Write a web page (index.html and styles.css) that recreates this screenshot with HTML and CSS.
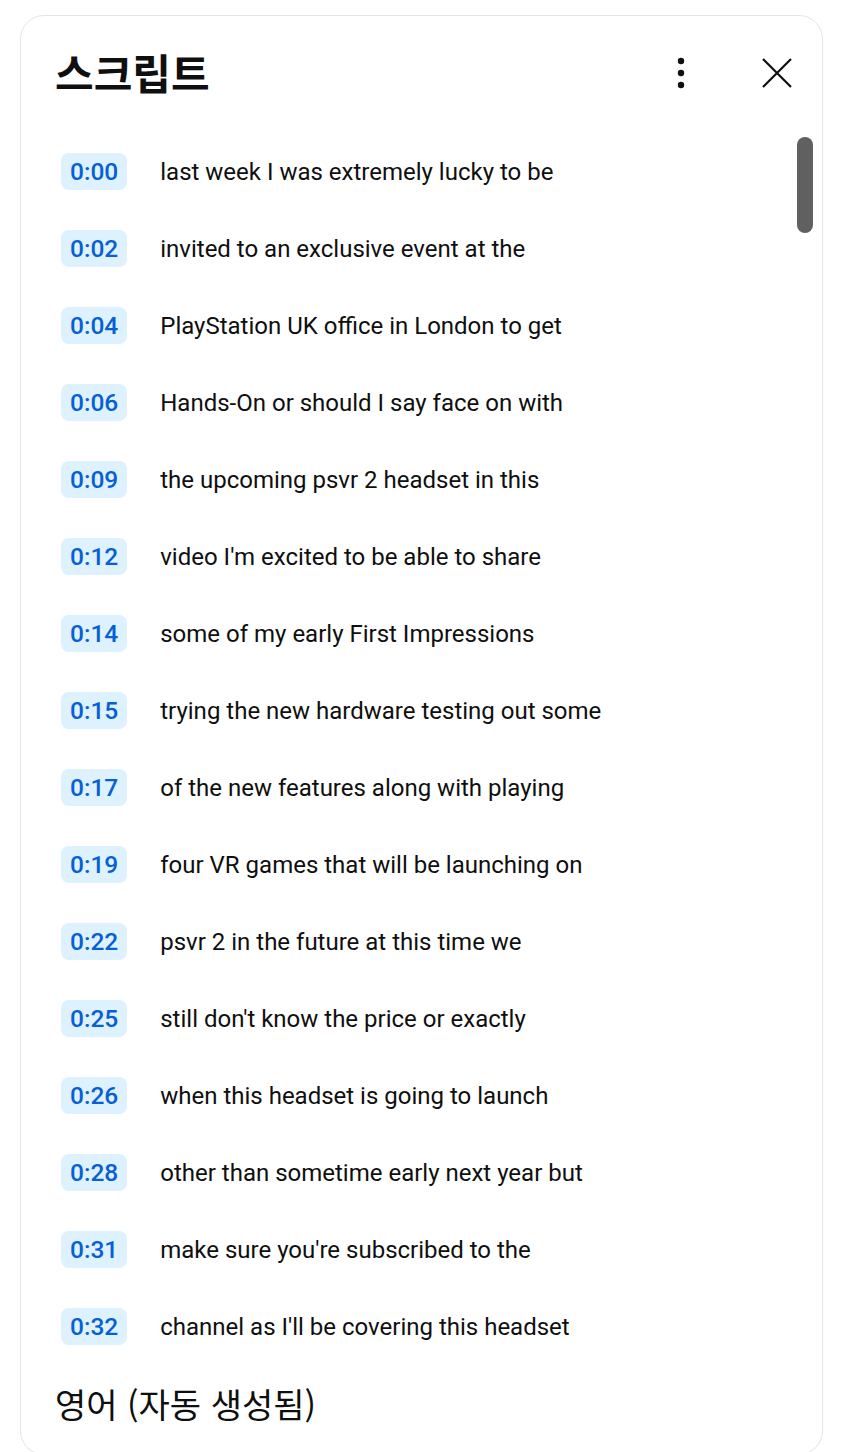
FILE: index.html
```html
<!DOCTYPE html>
<html lang="ko">
<head>
<meta charset="utf-8">
<link rel="stylesheet" href="styles.css">
</head>
<body>
<div class="panel">
  <div class="header">
    <h1 class="title">스크립트</h1>
    <button class="icon-btn more" aria-label="more">
      <svg width="12" height="36" viewBox="0 0 12 36"><circle cx="6" cy="6" r="3.2"/><circle cx="6" cy="18" r="3.2"/><circle cx="6" cy="30" r="3.2"/></svg>
    </button>
    <button class="icon-btn close" aria-label="close">
      <svg width="32" height="32" viewBox="0 0 32 32"><path d="M2 2 L30 30 M30 2 L2 30" stroke="#0f0f0f" stroke-width="2.2" fill="none"/></svg>
    </button>
  </div>
  <div class="list">
    <div class="thumb"></div>
    <div class="row"><span class="ts">0:00</span><span class="txt">last week I was extremely lucky to be</span></div>
    <div class="row"><span class="ts">0:02</span><span class="txt">invited to an exclusive event at the</span></div>
    <div class="row"><span class="ts">0:04</span><span class="txt">PlayStation UK office in London to get</span></div>
    <div class="row"><span class="ts">0:06</span><span class="txt">Hands-On or should I say face on with</span></div>
    <div class="row"><span class="ts">0:09</span><span class="txt">the upcoming psvr 2 headset in this</span></div>
    <div class="row"><span class="ts">0:12</span><span class="txt">video I'm excited to be able to share</span></div>
    <div class="row"><span class="ts">0:14</span><span class="txt">some of my early First Impressions</span></div>
    <div class="row"><span class="ts">0:15</span><span class="txt">trying the new hardware testing out some</span></div>
    <div class="row"><span class="ts">0:17</span><span class="txt">of the new features along with playing</span></div>
    <div class="row"><span class="ts">0:19</span><span class="txt">four VR games that will be launching on</span></div>
    <div class="row"><span class="ts">0:22</span><span class="txt">psvr 2 in the future at this time we</span></div>
    <div class="row"><span class="ts">0:25</span><span class="txt">still don't know the price or exactly</span></div>
    <div class="row"><span class="ts">0:26</span><span class="txt">when this headset is going to launch</span></div>
    <div class="row"><span class="ts">0:28</span><span class="txt">other than sometime early next year but</span></div>
    <div class="row"><span class="ts">0:31</span><span class="txt">make sure you're subscribed to the</span></div>
    <div class="row"><span class="ts">0:32</span><span class="txt">channel as I'll be covering this headset</span></div>
  </div>
  <div class="footer">영어 (자동 생성됨)</div>
</div>
</body>
</html>
```
FILE: styles.css
```css
html, body {
  margin: 0;
  padding: 0;
  background: #ffffff;
  overflow: hidden;
}
body {
  font-family: Roboto, "Noto Sans CJK KR", sans-serif;
  color: #0f0f0f;
  padding: 15px 29px 0 20px;
}
.panel {
  border: 1px solid #e5e5e5;
  border-radius: 24px;
  height: 1440px;
  box-sizing: border-box;
  display: flex;
  flex-direction: column;
}
.header {
  height: 117px;
  display: flex;
  align-items: center;
  padding: 0 14px 6px 34px;
  box-sizing: border-box;
}
.title {
  margin: 0;
  flex: 1;
  font-family: "Noto Sans CJK KR", sans-serif;
  font-size: 42px;
  font-weight: 700;
  line-height: 1;
}
.icon-btn {
  background: none;
  border: 0;
  padding: 0;
  display: flex;
  align-items: center;
  justify-content: center;
}
.more {
  width: 12px;
  height: 40px;
  margin-right: 74px;
  margin-top: 3px;
}
.more svg { fill: #0f0f0f; }
.close {
  width: 32px;
  height: 32px;
  margin-right: 15px;
  margin-top: 3px;
}
.list {
  position: relative;
  padding-left: 40px;
}
.thumb {
  position: absolute;
  left: 776px;
  top: 4px;
  width: 16px;
  height: 96px;
  border-radius: 8px;
  background: #606060;
}
.row {
  height: 77px;
  display: flex;
  align-items: center;
}
.ts {
  background: #def1ff;
  color: #065fd4;
  font-size: 24.5px;
  font-weight: 500;
  border-radius: 8px;
  height: 37px;
  line-height: 37px;
  padding: 0 9px;
  margin-right: 33px;
}
.txt {
  font-size: 24px;
}
.footer {
  padding: 16px 0 0 34px;
  font-family: "Noto Sans CJK KR", sans-serif;
  font-size: 34px;
  line-height: 46px;
}
```
